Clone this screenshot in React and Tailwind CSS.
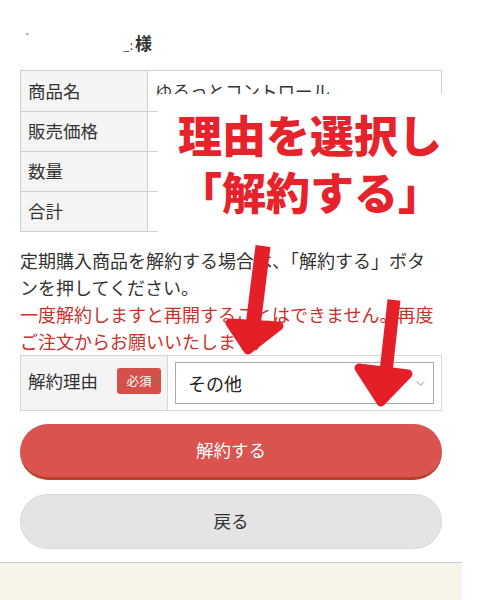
import React from "react";
import { ChevronDown } from "lucide-react";

const rows = [
  ["商品名", "ゆるっとコントロール"],
  ["販売価格", ""],
  ["数量", ""],
  ["合計", ""],
];

export default function App() {
  return (
    <div
      className="relative w-[480px] h-[600px] overflow-hidden bg-white text-[#333] text-[17.5px]"
      style={{ fontFamily: '"Noto Sans CJK JP", "Noto Sans", sans-serif' }}
    >
      <div className="w-[462px]">
        {/* title (partly erased in the screenshot) */}
        <div className="px-5 pt-[31px] h-[70px]">
          <div className="flex items-start h-6">
            <span className="ml-[6px] text-[9px] leading-none text-[#555] mt-[2px]">゜</span>
            <span className="ml-[88px] text-[12px] leading-none text-[#444] mt-[8px]">_:</span>
            <span className="ml-[2px] text-[17px] font-bold leading-6">様</span>
          </div>
        </div>

        <div className="px-5">
          {/* product table */}
          <div className="border border-[#cfcfcf]">
            {rows.map(([label, value], i) => (
              <div
                key={label}
                className={`flex h-[40px] ${i > 0 ? "border-t border-[#cfcfcf]" : ""}`}
              >
                <div className="w-[127px] shrink-0 bg-[#f4f4f4] border-r border-[#cfcfcf] pl-[7px] flex items-center">
                  {label}
                </div>
                <div className="flex-1 pl-[7px] flex items-center">{value}</div>
              </div>
            ))}
          </div>

          {/* notes */}
          <div className="mt-[15px] leading-[27px] text-[18px]">
            <p>定期購入商品を解約する場合は、「解約する」ボタンを押してください。</p>
            <p className="text-[#c8312c]">
              一度解約しますと再開することはできません。再度ご注文からお願いいたします。
            </p>
          </div>

          {/* reason select */}
          <div className="flex h-[56px] border border-[#d6d6d6]">
            <div className="w-[147px] shrink-0 bg-[#f4f4f4] border-r border-[#d6d6d6] pl-[7px] flex items-center justify-between pr-[6px]">
              <span className="mt-[-3px]">解約理由</span>
              <span className="bg-[#d6504b] text-white text-[12.5px] rounded-[3px] w-[44px] h-[26px] flex items-center justify-center mt-[-4px]">
                必須
              </span>
            </div>
            <div className="flex-1 px-[7px] pt-[6px]">
              <div className="h-[42px] border border-[#a9a9a9] flex items-center justify-between pl-3 pr-[6px] text-[18px] text-[#222]">
                <span>その他</span>
                <ChevronDown size={13} strokeWidth={1.3} className="text-[#666]" />
              </div>
            </div>
          </div>

          {/* buttons */}
          <button className="mt-[13px] w-full h-[56px] rounded-full bg-[#d9534f] border-b-[3px] border-[#b8402c] text-white text-[17.5px] flex items-center justify-center">
            解約する
          </button>
          <button className="mt-[14px] w-full h-[55px] rounded-full bg-[#e4e4e4] border border-[#dadada] text-[#333] text-[17.5px] flex items-center justify-center">
            戻る
          </button>
        </div>

        {/* footer */}
        <div className="mt-[13px] h-[60px] border-t border-[#cccccc] bg-[#f7f5ea]" />
      </div>

      {/* annotation: white box with red text */}
      <div className="absolute left-[158px] top-[94px] w-[304px] h-[144px] bg-white flex flex-col items-center pt-[12px]">
        <div className="text-[44px] font-black leading-[57px] text-[#e6222b]">理由を選択し</div>
        <div className="text-[44px] font-black leading-[57px] text-[#e6222b]">「解約する」</div>
      </div>

      {/* annotation arrows */}
      <svg className="absolute left-0 top-0 pointer-events-none" width="480" height="600">
        <g fill="#e41f28" stroke="#e41f28" strokeLinejoin="round">
          <line x1="263" y1="246" x2="253" y2="326" strokeWidth="15" />
          <polygon points="230,323 279,326 248,350" strokeWidth="9" />
          <line x1="394" y1="300" x2="386" y2="372" strokeWidth="13" />
          <polygon points="359,368 408,374 381,402" strokeWidth="9" />
        </g>
      </svg>
    </div>
  );
}
